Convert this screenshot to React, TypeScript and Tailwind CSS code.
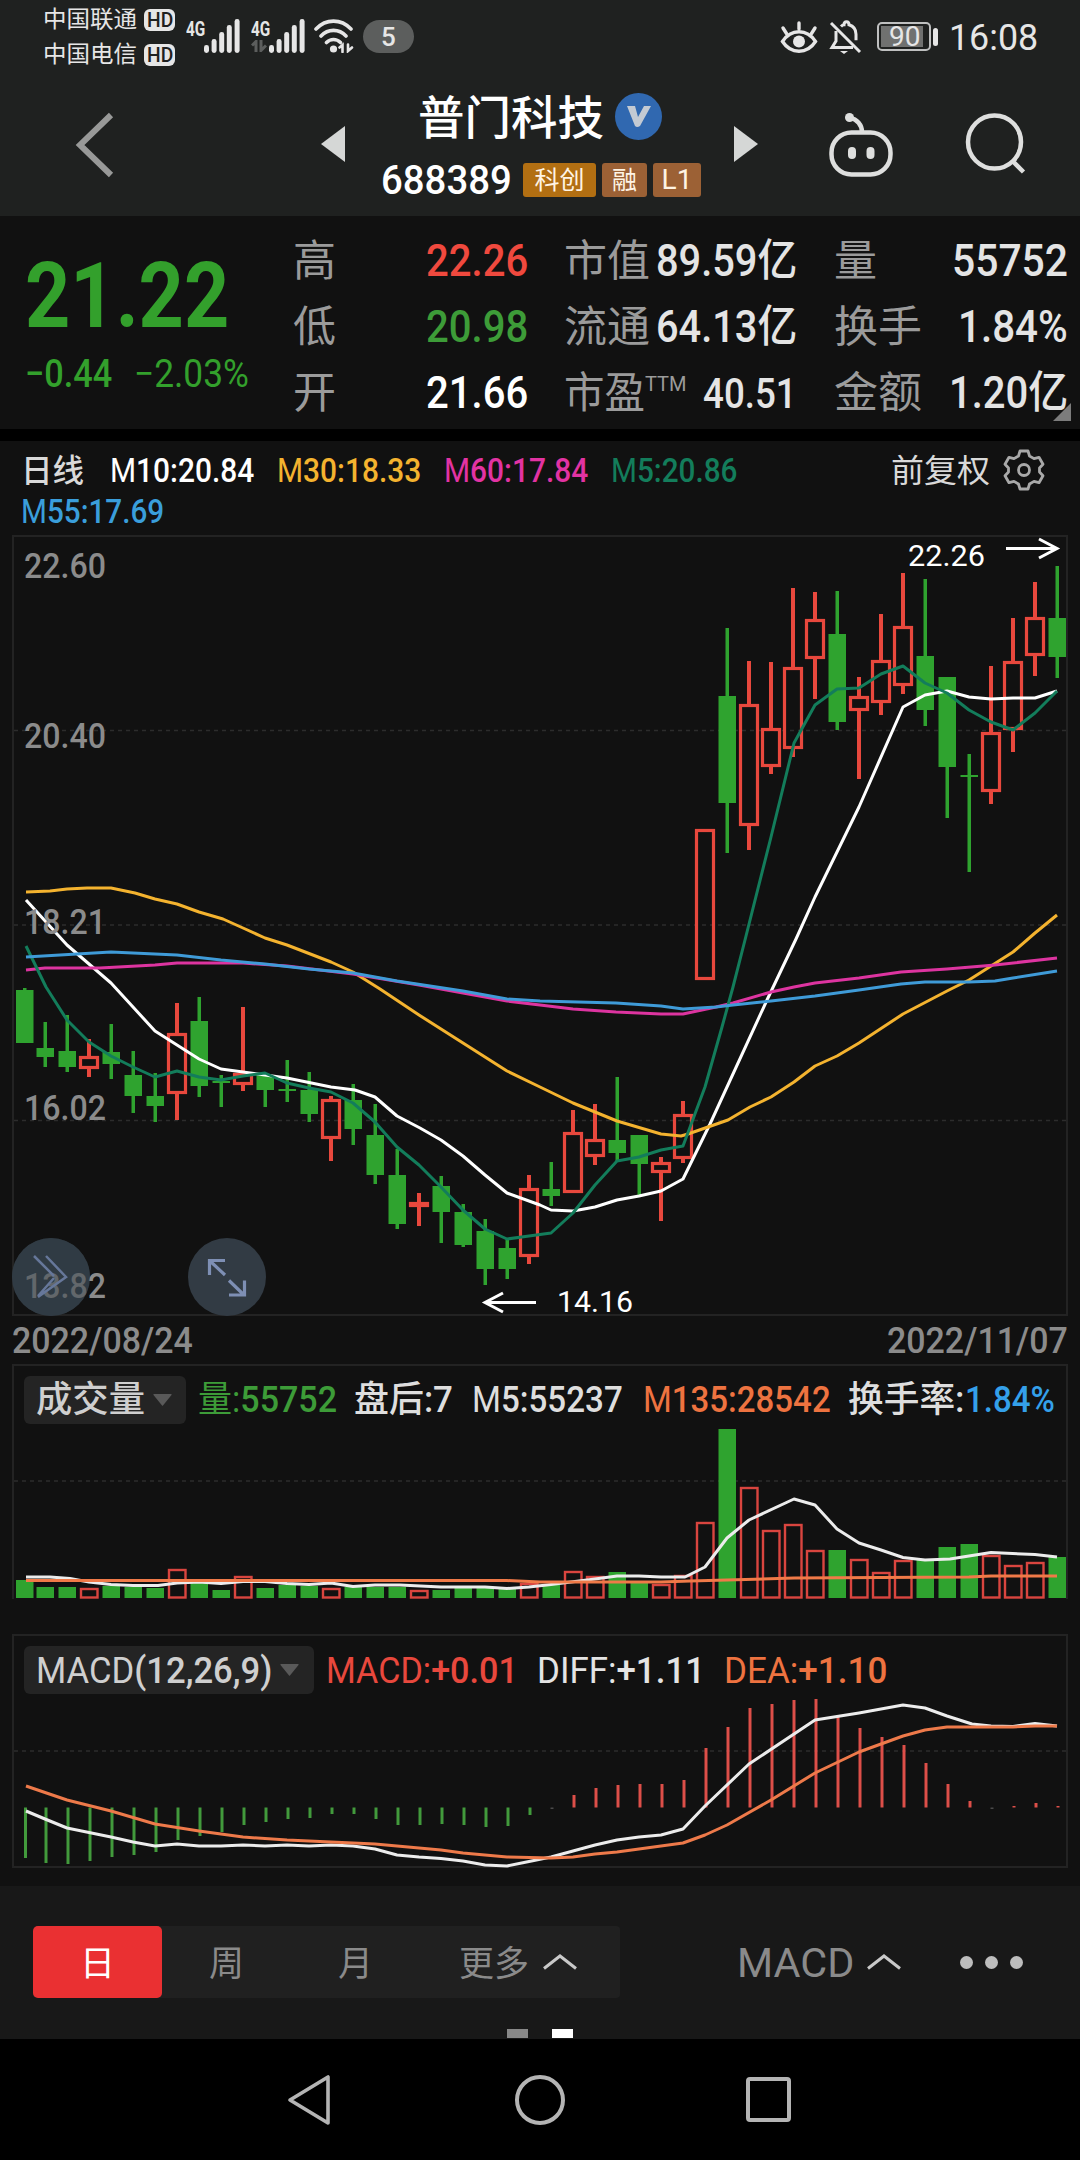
import { ReactNode, useLayoutEffect, useRef, useState } from 'react'

type Candle = [up: 0 | 1, high: number, low: number, top: number, bottom: number]
type Point = [number, number]

const RED = '#e8483d'
const GREEN = '#2fa32f'

const candles: Candle[] = [
  [0, 988, 1043, 990, 1043], [0, 1022, 1067, 1048, 1057], [0, 1015, 1072, 1051, 1067],
  [1, 1039, 1077, 1056, 1069], [0, 1024, 1079, 1052, 1064], [0, 1051, 1113, 1075, 1096],
  [0, 1073, 1122, 1096, 1106], [1, 1003, 1120, 1033, 1094], [0, 997, 1097, 1021, 1086],
  [0, 1075, 1107, 1081, 1083], [1, 1007, 1091, 1073, 1085], [0, 1073, 1107, 1075, 1090],
  [0, 1060, 1102, 1089, 1091], [0, 1072, 1122, 1090, 1114], [1, 1096, 1161, 1099, 1139],
  [0, 1084, 1145, 1100, 1129], [0, 1104, 1184, 1135, 1175], [0, 1149, 1229, 1175, 1224],
  [1, 1193, 1226, 1202, 1207], [0, 1176, 1243, 1186, 1212], [0, 1204, 1247, 1212, 1245],
  [0, 1219, 1285, 1231, 1269], [0, 1239, 1279, 1248, 1269], [1, 1175, 1264, 1188, 1257],
  [0, 1162, 1206, 1189, 1196], [1, 1110, 1193, 1132, 1193], [1, 1104, 1165, 1139, 1157],
  [0, 1077, 1161, 1140, 1153], [0, 1135, 1195, 1135, 1164], [1, 1157, 1221, 1162, 1173],
  [1, 1101, 1163, 1114, 1159], [1, 829, 980, 829, 980], [0, 628, 853, 696, 803],
  [1, 661, 850, 704, 826], [1, 662, 774, 728, 767], [1, 588, 757, 667, 749],
  [1, 592, 699, 619, 659], [0, 591, 730, 634, 722], [1, 677, 779, 696, 711],
  [1, 614, 715, 660, 703], [1, 573, 694, 626, 686], [0, 579, 726, 656, 710],
  [0, 677, 818, 677, 767], [0, 754, 872, 775, 777], [1, 666, 804, 732, 792],
  [1, 618, 752, 661, 730], [1, 582, 676, 617, 656], [0, 566, 678, 618, 657],
]

const ma10: Point[] = [
  [26, 900], [67, 945], [111, 983], [133, 1007], [155, 1031], [177, 1045], [199, 1059], [221, 1069],
  [265, 1075], [287, 1078], [331, 1087], [355, 1090], [375, 1097], [397, 1116], [420, 1128], [441, 1140],
  [463, 1156], [485, 1175], [507, 1193], [540, 1205], [551, 1210], [573, 1211], [595, 1207], [617, 1200],
  [639, 1196], [661, 1191], [683, 1179], [710, 1124], [767, 1000], [796, 939], [815, 897], [859, 807],
  [903, 707], [925, 695], [947, 691], [969, 697], [991, 699], [1013, 698], [1035, 698], [1057, 691],
]
const ma5: Point[] = [
  [26, 946], [46, 987], [67, 1020], [89, 1042], [111, 1056], [133, 1067], [155, 1077], [177, 1071],
  [199, 1077], [221, 1080], [243, 1076], [265, 1073], [287, 1083], [309, 1088], [331, 1092], [353, 1103],
  [375, 1122], [397, 1147], [419, 1165], [441, 1187], [463, 1210], [485, 1229], [507, 1239], [529, 1236],
  [551, 1233], [573, 1213], [595, 1185], [617, 1161], [639, 1157], [661, 1150], [683, 1146], [705, 1087],
  [722, 1027], [733, 987], [745, 940], [771, 837], [794, 743], [815, 705], [837, 689], [859, 688],
  [881, 674], [903, 666], [925, 683], [947, 693], [969, 710], [991, 722], [1013, 730], [1035, 713], [1057, 691],
]
const ma30: Point[] = [
  [26, 892], [50, 891], [67, 889], [87, 888], [111, 888], [135, 893], [155, 899], [177, 904], [199, 912],
  [223, 919], [243, 928], [265, 938], [287, 945], [331, 962], [353, 972], [380, 989], [419, 1015],
  [463, 1043], [507, 1071], [540, 1087], [573, 1103], [595, 1112], [617, 1121], [661, 1134], [681, 1136],
  [688, 1134], [728, 1120], [750, 1107], [771, 1097], [794, 1082], [815, 1066], [837, 1056], [859, 1043],
  [903, 1014], [947, 991], [969, 980], [991, 966], [1013, 952], [1035, 933], [1057, 915],
]
const ma60: Point[] = [
  [26, 970], [45, 968], [100, 968], [155, 965], [177, 963], [243, 963], [287, 966], [353, 974], [419, 985],
  [463, 993], [507, 1001], [540, 1005], [573, 1009], [616, 1012], [661, 1014], [683, 1014], [716, 1007],
  [733, 1003], [771, 992], [794, 987], [815, 983], [859, 978], [901, 972], [947, 969], [995, 965], [1057, 958],
]
const ma55: Point[] = [
  [26, 957], [60, 955], [111, 952], [177, 955], [221, 960], [265, 964], [309, 969], [353, 973], [397, 981],
  [463, 991], [507, 999], [540, 1001], [616, 1003], [661, 1006], [683, 1009], [716, 1007], [733, 1005],
  [771, 1001], [815, 996], [859, 990], [901, 984], [925, 982], [969, 982], [995, 981], [1013, 978], [1057, 971],
]

const volumeTops = [
  1580, 1587, 1587, 1588, 1586, 1587, 1588, 1569, 1583, 1590, 1576, 1588, 1585, 1586, 1588, 1587,
  1587, 1587, 1590, 1590, 1588, 1588, 1588, 1583, 1585, 1571, 1576, 1572, 1583, 1584, 1575, 1522,
  1429, 1487, 1530, 1524, 1550, 1550, 1559, 1572, 1560, 1560, 1547, 1544, 1555, 1565, 1562, 1557,
]
const volumeM5: Point[] = [
  [26, 1577], [50, 1577], [70, 1578.5], [89, 1582], [111, 1584.5], [133, 1585.5], [158, 1585.5], [177, 1583],
  [199, 1582], [221, 1583.5], [243, 1581.5], [265, 1581.5], [287, 1583.5], [309, 1584.5], [331, 1583],
  [353, 1586.5], [375, 1585], [400, 1585], [441, 1587], [485, 1587], [507, 1588.5], [529, 1587],
  [551, 1584.5], [595, 1579], [617, 1576], [639, 1576], [661, 1577], [685, 1577], [705, 1567], [727, 1538],
  [749, 1520], [794, 1499], [815, 1505], [837, 1529], [859, 1543], [881, 1550], [903, 1557.5], [925, 1560],
  [950, 1559], [991, 1552.5], [1035, 1554.5], [1057, 1557],
]
const volumeM135: Point[] = [
  [26, 1580.5], [507, 1580.5], [540, 1582], [661, 1582], [690, 1581], [727, 1580], [794, 1578],
  [881, 1577.5], [969, 1577], [991, 1576], [1057, 1576],
]

const MACD_ZERO = 1807.5
const macdEnds = [
  1858, 1863, 1864, 1861, 1857, 1855, 1852, 1840, 1836, 1832, 1825, 1822, 1819, 1818, 1814, 1814,
  1819, 1825, 1825, 1824, 1825, 1827, 1826, 1815, 1809, 1795, 1788, 1785, 1784, 1784, 1780, 1748,
  1727, 1708, 1704, 1700, 1699, 1715, 1728, 1737, 1745, 1763, 1784, 1801, 1809, 1806, 1803, 1806,
]
const diff: Point[] = [
  [26, 1811], [45, 1819], [67, 1828], [111, 1837], [133, 1842], [155, 1846], [177, 1844], [199, 1846],
  [221, 1846], [243, 1845], [265, 1846], [287, 1845], [309, 1846], [331, 1845], [353, 1846], [375, 1849],
  [397, 1855], [419, 1857], [441, 1858.5], [463, 1861], [485, 1865], [507, 1866], [529, 1861.5], [551, 1857],
  [573, 1851], [595, 1845], [617, 1840], [639, 1837], [661, 1835], [683, 1829], [705, 1806], [749, 1764],
  [815, 1720], [859, 1713], [903, 1705], [925, 1708], [947, 1716], [972, 1724], [991, 1726], [1013, 1726.5],
  [1035, 1723.5], [1057, 1726],
]
const dea: Point[] = [
  [26, 1786], [67, 1800], [111, 1811], [155, 1824], [199, 1831], [243, 1837], [287, 1840], [331, 1842],
  [375, 1844], [441, 1850], [463, 1853], [507, 1857], [551, 1858], [573, 1857], [595, 1854], [617, 1852],
  [683, 1843], [705, 1835], [727, 1825], [771, 1800], [815, 1773], [859, 1752], [903, 1736], [925, 1730],
  [947, 1727], [1013, 1727], [1035, 1726], [1057, 1726],
]

const xAt = (i: number) => (i === 0 ? 24.5 : 23 + i * 22)

// Squeezes or stretches one line of text to a fixed column width
function Fit({ w, className = '', children }: { w: number; className?: string; children: ReactNode }) {
  const ref = useRef<HTMLSpanElement>(null)
  const [scale, setScale] = useState(1)

  useLayoutEffect(() => {
    if (ref.current) setScale(w / ref.current.offsetWidth)
  }, [w])

  return (
    <span className={`block shrink-0 leading-none ${className}`} style={{ width: w }}>
      <span
        ref={ref}
        className="inline-block origin-left whitespace-nowrap align-top"
        style={{ transform: `scaleX(${scale})` }}
      >
        {children}
      </span>
    </span>
  )
}

function Line({ points, color, width = 3 }: { points: Point[]; color: string; width?: number }) {
  return (
    <polyline
      points={points.map((p) => p.join(',')).join(' ')}
      fill="none"
      stroke={color}
      strokeWidth={width}
      strokeLinejoin="round"
    />
  )
}

function Grid({ y }: { y: number }) {
  return <path d={`M14 ${y}H1066`} stroke="#2c2c2c" strokeWidth="1.5" strokeDasharray="4 4" />
}

function Signal() {
  return (
    <svg className="h-[34px] w-[36px]" viewBox="0 0 36 34" fill="#e6e6e6">
      <rect x="0" y="26" width="5" height="8" rx="2.4" />
      <rect x="7.6" y="20" width="5" height="14" rx="2.4" />
      <rect x="15.2" y="13" width="5" height="21" rx="2.4" />
      <rect x="22.8" y="6" width="5" height="28" rx="2.4" />
      <rect x="30.6" y="0" width="5" height="34" rx="2.4" />
    </svg>
  )
}

function Carrier({ name }: { name: string }) {
  return (
    <div className="flex h-[35px] items-center gap-[7px]">
      <Fit w={94} className="-ml-px text-[23px]">{name}</Fit>
      <span className="flex h-[22px] w-[31px] items-center justify-center rounded-[6px] bg-[#e6e6e6] text-[#1f2120]">
        <Fit w={26} className="text-[20px] font-medium">HD</Fit>
      </span>
    </div>
  )
}

function StatusBar() {
  return (
    <div className="flex h-[72px] pl-[44px] text-[#e6e6e6]">
      <div className="flex w-[142px] flex-col pt-[2px]">
        <Carrier name="中国联通" />
        <Carrier name="中国电信" />
      </div>
      <div className="flex w-[65px] pt-[19px]">
        <Fit w={19} className="text-[21px] font-bold">4G</Fit>
        <div className="-ml-px">
          <Signal />
        </div>
      </div>
      <div className="flex w-[63px] pt-[19px]">
        <div className="w-[18px]">
          <Fit w={19} className="text-[21px] font-bold">4G</Fit>
          <svg className="h-[12px] w-[16px]" viewBox="0 0 16 12" fill="none" stroke="#5c5e5d" strokeWidth="3">
            <path d="M1 5.5 5 1.5V12M10 0v10.5l5-5" />
          </svg>
        </div>
        <Signal />
      </div>
      <svg className="mt-[19px] h-[34px] w-[40px]" viewBox="0 0 40 34" fill="none" stroke="#e6e6e6" strokeWidth="3.6" strokeLinecap="round">
        <path d="M2 10C12-.5 27-.5 37 10M7 17c7-7.5 18-7.5 25 0M12.5 23.5c4-4 10-4 14 0" />
        <circle cx="19.5" cy="30" r="3.6" fill="#e6e6e6" stroke="none" />
        <path d="m25.5 28.5 3-2.5v7M34 25.5V32l4-3.5" strokeWidth="2.6" />
      </svg>
      <div className="ml-[9px] mt-[20px] flex h-[33px] w-[51px] items-center justify-center rounded-full bg-[#5c5e5d] text-[26px] font-medium leading-none">
        5
      </div>
      <svg className="ml-[366px] mt-[20px] h-[34px] w-[38px]" viewBox="0 0 38 34" fill="none" stroke="#e6e6e6" strokeWidth="3.4" strokeLinecap="round">
        <path d="M2.5 21.5C11 8.5 27 8.5 35.5 21.5 27 34.5 11 34.5 2.5 21.5Z" />
        <path d="M19 3v6M3 8l3.5 5.5M35 8l-3.5 5.5" />
        <circle cx="19" cy="21.5" r="6" fill="#e6e6e6" stroke="none" />
      </svg>
      <svg className="ml-[11px] mt-[19px] h-[36px] w-[34px]" viewBox="0 0 34 36" fill="none" stroke="#e6e6e6" strokeWidth="3">
        <path d="M2 4l29 29" />
        <path d="M7 12v10l-4 6.5h21M12 7.5c1-1 2.5-1.7 3-1.7 0-4 5-4 5 0 4 1.2 7 4.5 7 9.5v6" />
        <path d="M11 32h8l-4 3z" fill="#e6e6e6" stroke="none" />
      </svg>
      <div className="ml-[14px] mt-[22px] flex h-[29px] w-[54px] rounded-[5px] border-2 border-[#bfc0c0] p-[2px]">
        <div className="flex w-[42px] items-center justify-end bg-[#707170]">
          <Fit w={31} className="mr-[3px] text-[28px]">90</Fit>
        </div>
      </div>
      <div className="ml-[2px] mt-[28px] h-[18px] w-[5px] rounded-full bg-[#e6e6e6]" />
      <Fit w={89} className="ml-[11px] mt-[19px] text-[37px]">16:08</Fit>
    </div>
  )
}

function Header() {
  return (
    <header className="flex h-[144px] text-white">
      <svg className="ml-[74px] mt-[40px] h-[66px] w-[42px]" viewBox="0 0 42 66" fill="none" stroke="#989998" strokeWidth="6">
        <path d="M37 3 6 33l31 30" />
      </svg>
      <svg className="ml-[205px] mt-[54px] h-[36px] w-[24px]" viewBox="0 0 24 36" fill="#d5d7d6">
        <path d="M24 0v36L0 18z" />
      </svg>
      <div className="ml-[36px] w-[320px] pt-[20px]">
        <div className="flex h-[48px] items-center pl-[37px]">
          <Fit w={186} className="pt-[3px] text-[46px] font-medium">普门科技</Fit>
          <div className="ml-[11px] flex size-[47px] items-center justify-center rounded-full bg-[#3068b0]">
            <svg className="mt-px h-[21px] w-[24px]" viewBox="0 0 24 21" fill="#c3cad3">
              <path d="M0 0h8l3 11L17 0h7L13 20q-3 2-5 0z" />
            </svg>
          </div>
        </div>
        <div className="mt-[22px] flex h-[36px] items-center">
          <Fit w={131} className="pt-px text-[41px] font-medium">688389</Fit>
          <div className="ml-[11px] flex h-[34px] gap-[6px] text-[25px] leading-none text-[#fff4e4]">
            <span className="flex w-[73px] items-center justify-center rounded-[3px] bg-[#b26f12]">科创</span>
            <span className="flex w-[45px] items-center justify-center rounded-[3px] bg-[#9c6135]">融</span>
            <span className="flex w-[48px] items-center justify-center rounded-[3px] bg-[#9c6135] text-[28px]">L1</span>
          </div>
        </div>
      </div>
      <svg className="ml-[33px] mt-[54px] h-[36px] w-[24px]" viewBox="0 0 24 36" fill="#d5d7d6">
        <path d="M0 0v36l24-18z" />
      </svg>
      <svg className="ml-[69px] mt-[40px] h-[66px] w-[68px]" viewBox="0 0 68 66" fill="none" stroke="#dedfde" strokeWidth="4.5">
        <rect x="4.5" y="20.5" width="59" height="42" rx="20" />
        <path d="M23 6c7 1 12 7 12 14" />
        <circle cx="22.5" cy="5.5" r="4.5" fill="#dedfde" stroke="none" />
        <path d="M25 39v4M43.5 39v4" strokeWidth="8" strokeLinecap="round" />
      </svg>
      <svg className="ml-[69px] mt-[39px] h-[64px] w-[64px]" viewBox="0 0 64 64" fill="none" stroke="#dedfde" strokeWidth="4.5">
        <circle cx="30.5" cy="31" r="26.5" />
        <path d="M49 50.5 59.5 61" />
      </svg>
    </header>
  )
}

function Quote() {
  return (
    <section className="flex h-[213px] bg-[#111]">
      <div className="w-[293px] pl-[25px] pt-[35px] text-[#33a02c]">
        <Fit w={204} className="text-[91px] font-bold">21.22</Fit>
        <div className="mt-[13px] flex gap-[22px] text-[39px]">
          <Fit w={87} className="font-medium">−0.44</Fit>
          <Fit w={115}>−2.03%</Fit>
        </div>
      </div>
      <div className="w-[235px] pt-[12px] text-[43px] leading-none text-[#9b9b9b]">
        <div className="flex h-[66px] items-center justify-between">
          <span>高</span>
          <Fit w={102} className="text-[44px] font-medium text-[#f0493e]">22.26</Fit>
        </div>
        <div className="flex h-[66px] items-center justify-between">
          <span>低</span>
          <Fit w={102} className="text-[44px] font-medium text-[#3d9c38]">20.98</Fit>
        </div>
        <div className="flex h-[66px] items-center justify-between">
          <span>开</span>
          <Fit w={102} className="text-[44px] font-medium text-white">21.66</Fit>
        </div>
      </div>
      <div className="ml-[36px] w-[233px] pt-[12px] text-[43px] leading-none text-[#9b9b9b]">
        <div className="flex h-[66px] items-center justify-between">
          <Fit w={86}>市值</Fit>
          <Fit w={141} className="text-[44px] font-medium text-[#e4e4e4]">89.59亿</Fit>
        </div>
        <div className="flex h-[66px] items-center justify-between">
          <Fit w={86}>流通</Fit>
          <Fit w={141} className="text-[44px] font-medium text-[#e4e4e4]">64.13亿</Fit>
        </div>
        <div className="flex h-[66px] items-center">
          <Fit w={81}>市盈</Fit>
          <Fit w={42} className="mb-[17px] text-[21px]">TTM</Fit>
          <Fit w={94} className="ml-[16px] text-[43px] font-medium text-[#e4e4e4]">40.51</Fit>
        </div>
      </div>
      <div className="relative ml-[37px] w-[234px] pt-[12px] text-[43px] leading-none text-[#9b9b9b]">
        <div className="flex h-[66px] items-center justify-between">
          <span>量</span>
          <Fit w={116} className="text-[44px] font-medium text-[#e4e4e4]">55752</Fit>
        </div>
        <div className="flex h-[66px] items-center justify-between">
          <Fit w={88}>换手</Fit>
          <Fit w={110} className="text-[44px] font-medium text-[#e4e4e4]">1.84%</Fit>
        </div>
        <div className="flex h-[66px] items-center justify-between">
          <Fit w={88}>金额</Fit>
          <Fit w={119} className="text-[44px] font-medium text-[#e4e4e4]">1.20亿</Fit>
        </div>
        <svg className="absolute -right-[3px] bottom-[8px] size-[18px]" viewBox="0 0 18 18" fill="#7c7c7c">
          <path d="M18 0v18H0z" />
        </svg>
      </div>
    </section>
  )
}

function Legend() {
  return (
    <div className="h-[94px] pl-[21px] pt-[12px] text-[33px]">
      <div className="flex h-[34px] items-center">
        <Fit w={63} className="pt-px text-[32px] font-medium text-[#d9d9d9]">日线</Fit>
        <Fit w={144} className="ml-[26px] text-white">M<b className="font-medium">10:20.84</b></Fit>
        <Fit w={144} className="ml-[23px] text-[#f4b32f]">M<b className="font-medium">30:18.33</b></Fit>
        <Fit w={144} className="ml-[23px] text-[#e233a3]">M<b className="font-medium">60:17.84</b></Fit>
        <Fit w={126} className="ml-[23px] text-[#137d5b]">M<b className="font-medium">5:20.86</b></Fit>
        <Fit w={99} className="ml-[154px] pt-px text-[32px] text-[#d9d9d9]">前复权</Fit>
        <svg className="ml-[13px] size-[42px]" viewBox="0 0 42 42" fill="none" stroke="#a9a9a9" strokeWidth="2.8" strokeLinejoin="round">
          <path d="M17 2h8l1.500 5 4.500 2.600 5-1.300 4 7-3.500 3.700v4L40 26.700l-4 7-5-1.300-4.500 2.600L25 40h-8l-1.500-5-4.500-2.600-5 1.300-4-7L5.500 23v-4L2 15.300l4-7 5 1.300L15.500 7z" />
          <circle cx="21" cy="21" r="5.5" />
        </svg>
      </div>
      <div className="mt-[7px] flex h-[34px] items-center text-[#3a9edb]">
        <Fit w={143}>M<b className="font-medium">55:17.69</b></Fit>
      </div>
    </div>
  )
}

function PriceChart() {
  return (
    <div className="relative mx-[12px] h-[781px] border-2 border-[#232323]">
      <svg className="block h-[777px] w-[1052px]" viewBox="14 537 1052 777" overflow="visible">
        <Grid y={730.5} />
        <Grid y={925} />
        <Grid y={1120.5} />
        {candles.map(([up, high, low, top, bottom], i) => {
          const x = xAt(i)
          return up ? (
            <g key={i} stroke={RED} fill="none">
              <path d={`M${x} ${high}V${top}M${x} ${bottom}V${low}`} strokeWidth="4" />
              <rect x={x - 8.5} y={top + 1.5} width="17" height={bottom - top - 3} strokeWidth="3.2" />
            </g>
          ) : (
            <g key={i} fill={GREEN}>
              <rect x={x - 1.5} y={high} width="3.5" height={low - high} />
              <rect x={x - 8.5} y={top} width="17.5" height={bottom - top} />
            </g>
          )
        })}
        <Line points={ma10} color="#ffffff" />
        <Line points={ma30} color="#f4b32f" />
        <Line points={ma60} color="#dd34a0" />
        <Line points={ma5} color="#137d5b" />
        <Line points={ma55} color="#3f9bd8" />
        <g fill="none" stroke="#fff" strokeWidth="3">
          <path d="M1006 548.5h50M1039 539l18 9.5-18 9.5" />
          <path d="M536 1302.5h-50M503 1293l-18 9.5 18 9.5" />
        </g>
        <g fill="#fff" fontSize="30">
          <text x="908" y="566" textLength="77" lengthAdjust="spacingAndGlyphs">22.26</text>
          <text x="557" y="1312" textLength="76" lengthAdjust="spacingAndGlyphs">14.16</text>
        </g>
        <circle cx="51" cy="1277" r="39" fill="#313b44" />
        <g fill="#8b8b8b" fontSize="35" fontWeight="500">
          <text x="24" y="578" textLength="82" lengthAdjust="spacingAndGlyphs">22.60</text>
          <text x="24" y="748" textLength="82" lengthAdjust="spacingAndGlyphs">20.40</text>
          <text x="24" y="934" textLength="82" lengthAdjust="spacingAndGlyphs">18.21</text>
          <text x="24" y="1120" textLength="82" lengthAdjust="spacingAndGlyphs">16.02</text>
          <text x="24" y="1298" textLength="82" lengthAdjust="spacingAndGlyphs">13.82</text>
        </g>
      </svg>
      <button className="absolute -left-[2px] bottom-[-2px] size-[78px] rounded-full bg-[#313b44]/45">
        <svg className="size-[78px]" viewBox="0 0 78 78" fill="none" stroke="#66779a" strokeWidth="2.5">
          <path d="m22 18 20 20M34 18l20 21-28 20M42 40 26 58" />
        </svg>
      </button>
      <button className="absolute bottom-[-2px] left-[174px] size-[78px] rounded-full bg-[#323b44]">
        <svg className="size-[78px]" viewBox="0 0 78 78" fill="none" stroke="#7e8fb4" strokeWidth="3.2">
          <path d="M37 22.5H21.5V37M22 23l15 14M41 57h15.5V42.5M56 57 41 42.5" />
        </svg>
      </button>
    </div>
  )
}

function Selector({ w, text, children }: { w: number; text: number; children: ReactNode }) {
  return (
    <button className="flex h-[48px] items-center rounded-[6px] bg-[#242424] pl-[12px] text-[#cfcfcf]" style={{ width: w }}>
      <Fit w={text} className="text-left">{children}</Fit>
      <svg className="ml-[8px] h-[12px] w-[19px]" viewBox="0 0 19 12" fill="#595959">
        <path d="M1 0h17q1 0 .5 1L10 11.500q-.5.500-1 0L.5 1Q0 0 1 0z" />
      </svg>
    </button>
  )
}

function VolumePanel() {
  return (
    <section className="mx-[12px] mt-[48px] border-2 border-b-0 border-[#232323]">
      <div className="flex h-[59px] items-center pl-[10px] pt-[9px] text-[36px] font-medium">
        <Selector w={162} text={109}>成交量</Selector>
        <Fit w={139} className="ml-[12px] font-normal text-[#3d9c38]">量:<b className="font-medium">55752</b></Fit>
        <Fit w={99} className="ml-[17px] text-[#dedede]">盘后:7</Fit>
        <Fit w={151} className="ml-[19px] text-[#dedede]"><i className="font-normal not-italic">M</i>5:55237</Fit>
        <Fit w={188} className="ml-[20px] text-[#ee7340]"><i className="font-normal not-italic">M</i>135:28542</Fit>
        <Fit w={117} className="ml-[17px] text-[#dedede]">换手率:</Fit>
        <Fit w={90} className="text-[#34a0ea]">1.84%</Fit>
      </div>
      <svg className="block h-[174px] w-[1052px]" viewBox="14 1425 1052 174">
        <Grid y={1481} />
        {volumeTops.map((top, i) =>
          candles[i][0] ? (
            <rect key={i} x={xAt(i) - 8} y={top + 1} width="16.5" height={1596.5 - top} fill="none" stroke="#d9453f" strokeWidth="2.4" />
          ) : (
            <rect key={i} x={xAt(i) - 8.5} y={top} width="17.5" height={1598 - top} fill={GREEN} />
          )
        )}
        <Line points={volumeM5} color="#ececec" />
        <Line points={volumeM135} color="#f07a48" />
      </svg>
    </section>
  )
}

function MacdPanel() {
  return (
    <section className="mx-[12px] mt-[35px] border-2 border-[#232323]">
      <div className="flex h-[60px] items-center pl-[10px] pt-[8px] text-[37px]">
        <Selector w={290} text={236}>MACD<b className="font-medium">(12,26,9)</b></Selector>
        <Fit w={192} className="ml-[12px] text-[#e8483d]">MACD:<b className="font-medium">+0.01</b></Fit>
        <Fit w={168} className="ml-[19px] text-[#e4e4e4]">DIFF:<b className="font-medium">+1.11</b></Fit>
        <Fit w={163} className="ml-[19px] text-[#ee7340]">DEA:<b className="font-medium">+1.10</b></Fit>
      </div>
      <svg className="block h-[170px] w-[1052px]" viewBox="14 1696 1052 170" overflow="visible">
        <Grid y={1751} />
        {macdEnds.map((end, i) => (
          <path
            key={i}
            d={`M${xAt(i) + 1} ${MACD_ZERO}V${end}`}
            stroke={end > MACD_ZERO ? (end < 1810 ? '#4a4a4a' : '#429a3c') : '#dd4f49'}
            strokeWidth="3"
          />
        ))}
        <Line points={diff} color="#ececec" />
        <Line points={dea} color="#ee7a4a" />
      </svg>
    </section>
  )
}

function Caret() {
  return (
    <svg className="h-[16px] w-[34px]" viewBox="0 0 34 16" fill="none" stroke="#c9c9c9" strokeWidth="3">
      <path d="M1 14.5 17 2l16 12.5" />
    </svg>
  )
}

function Toolbar() {
  return (
    <div className="h-[153px] bg-[#181818] pt-[40px] text-[#8a8a8a]">
      <div className="flex h-[72px] items-center pl-[33px] text-[35px] leading-none">
        <div className="flex h-full w-[587px] items-center rounded-[4px] bg-[#202020]">
          <button className="h-full w-[129px] rounded-[5px] bg-[#ea3032] pt-[4px] text-white">日</button>
          <button className="w-[129px] pt-[4px]">周</button>
          <button className="w-[129px] pt-[4px]">月</button>
          <button className="flex items-center gap-[14px] pl-[39px]">
            <span className="pt-[4px]">更多</span>
            <Caret />
          </button>
        </div>
        <button className="ml-[117px] flex items-center gap-[13px]">
          <Fit w={117} className="pt-[3px] text-left text-[41px]">MACD</Fit>
          <Caret />
        </button>
        <div className="ml-[59px] flex gap-[12px] pt-px">
          <i className="size-[13px] rounded-full bg-[#bdbdbd]" />
          <i className="size-[13px] rounded-full bg-[#bdbdbd]" />
          <i className="size-[13px] rounded-full bg-[#bdbdbd]" />
        </div>
      </div>
      <div className="mt-[31px] flex justify-center gap-[24px]">
        <i className="h-[9px] w-[21px] bg-[#888]" />
        <i className="h-[9px] w-[21px] bg-white" />
      </div>
    </div>
  )
}

function NavBar() {
  return (
    <nav className="flex h-[121px] items-center bg-black pl-[286px]">
      <svg className="h-[52px] w-[46px]" viewBox="0 0 46 52" fill="none" stroke="#b4b4b4" strokeWidth="3.6" strokeLinejoin="round">
        <path d="M42 3v46L4 26z" />
      </svg>
      <svg className="ml-[182px] size-[52px]" viewBox="0 0 52 52" fill="none" stroke="#b4b4b4" strokeWidth="4">
        <circle cx="26" cy="26" r="23" />
      </svg>
      <div className="ml-[180px] size-[45px] rounded-[4px] border-4 border-[#b4b4b4]" />
    </nav>
  )
}

export default function App() {
  return (
    <div className="h-[2160px] w-[1080px] overflow-hidden bg-[#111] font-['Roboto','Noto_Sans_CJK_SC',sans-serif]" lang="zh-CN">
      <div className="bg-[#1f2120]">
        <StatusBar />
        <Header />
      </div>
      <Quote />
      <div className="h-[12px] bg-black" />
      <main className="h-[1445px]">
        <Legend />
        <PriceChart />
        <div className="-mb-[48px] flex h-[48px] justify-between px-[12px] pt-[7px] text-[36px] font-medium text-[#8b8b8b]">
          <Fit w={181}>2022/08/24</Fit>
          <Fit w={181}>2022/11/07</Fit>
        </div>
        <VolumePanel />
        <MacdPanel />
      </main>
      <Toolbar />
      <NavBar />
    </div>
  )
}
